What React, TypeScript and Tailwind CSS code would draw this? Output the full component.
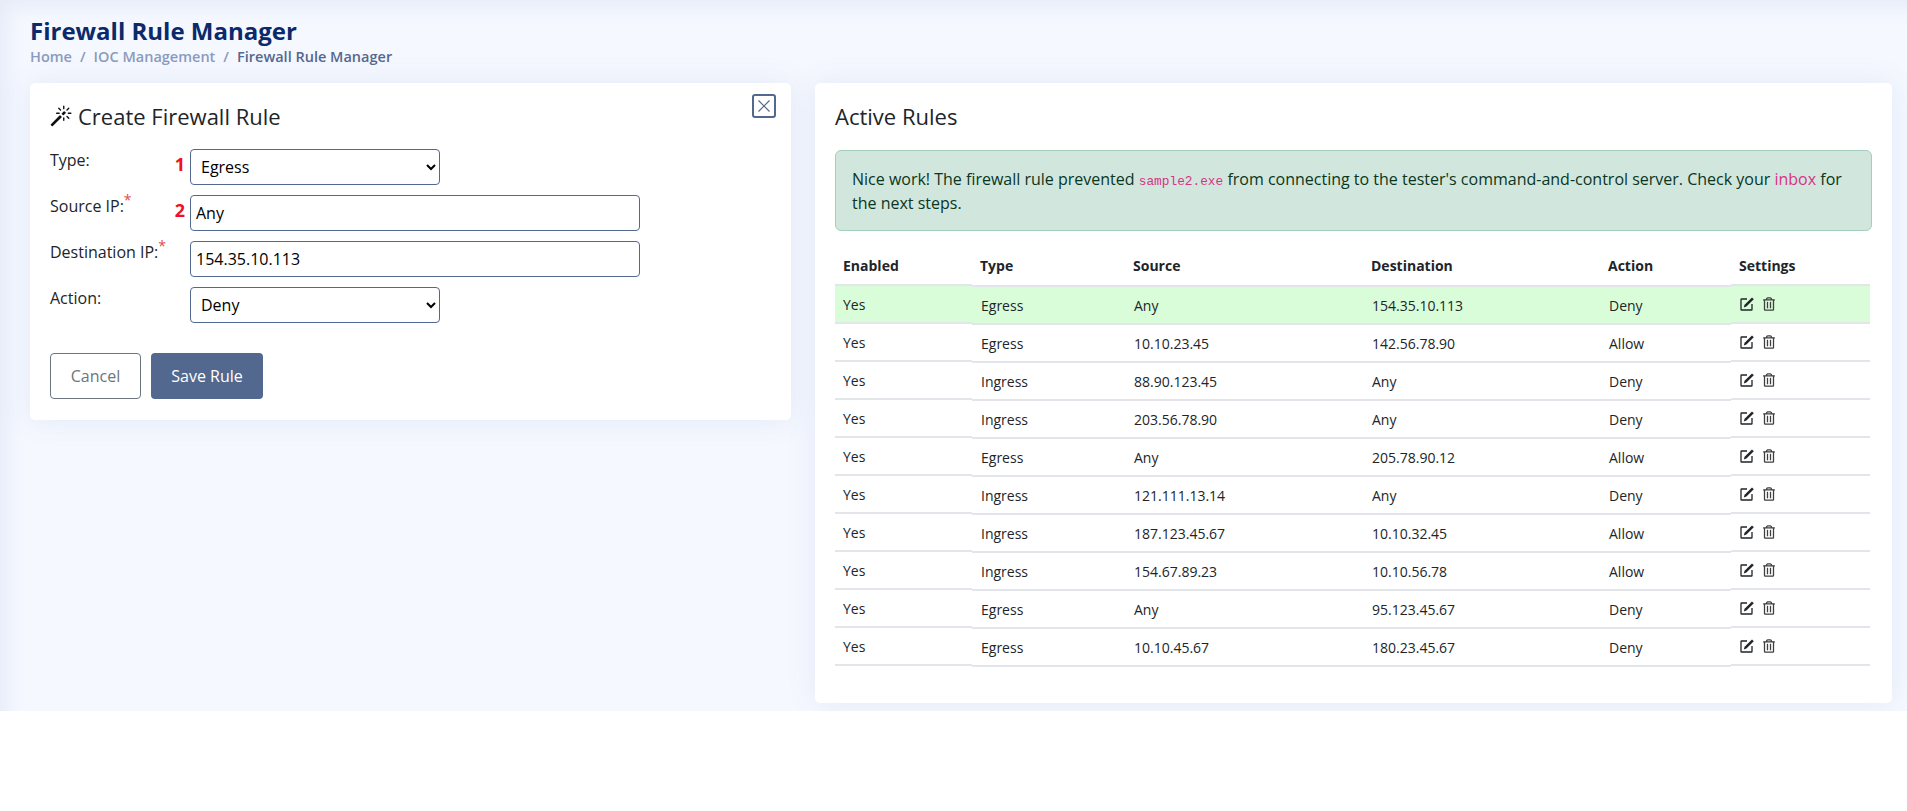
import React from 'react';
import { BsMagic } from 'react-icons/bs';
import { FaRegTrashAlt } from 'react-icons/fa';

const rules = [
    ['Yes', 'Egress', 'Any', '154.35.10.113', 'Deny'],
    ['Yes', 'Egress', '10.10.23.45', '142.56.78.90', 'Allow'],
    ['Yes', 'Ingress', '88.90.123.45', 'Any', 'Deny'],
    ['Yes', 'Ingress', '203.56.78.90', 'Any', 'Deny'],
    ['Yes', 'Egress', 'Any', '205.78.90.12', 'Allow'],
    ['Yes', 'Ingress', '121.111.13.14', 'Any', 'Deny'],
    ['Yes', 'Ingress', '187.123.45.67', '10.10.32.45', 'Allow'],
    ['Yes', 'Ingress', '154.67.89.23', '10.10.56.78', 'Allow'],
    ['Yes', 'Egress', 'Any', '95.123.45.67', 'Deny'],
    ['Yes', 'Egress', '10.10.45.67', '180.23.45.67', 'Deny'],
];

const columns = [
    { title: 'Enabled', width: 'w-[137px]', head: 'h-[55px] pb-[8px]', text: 'pl-2' },
    { title: 'Type', width: 'w-[153px]', head: 'h-[56px] pb-[9px]', text: 'pl-[9px]' },
    { title: 'Source', width: 'w-[238px]', head: 'h-[56px] pb-[9px]', text: 'pl-[9px]' },
    { title: 'Destination', width: 'w-[237px]', head: 'h-[56px] pb-[9px]', text: 'pl-[9px]' },
    { title: 'Action', width: 'w-[131px]', head: 'h-[56px] pb-[9px]', text: 'pl-[9px]' },
];

const EditIcon = () => (
    <svg width="14" height="14" viewBox="0 0 14 14" className="text-[#212529]">
        <path d="M7 2H1.6a.6.6 0 0 0-.6.6v9.8a.6.6 0 0 0 .6.6h9.8a.6.6 0 0 0 .6-.6V7" fill="none" stroke="currentColor" strokeWidth="1.3" />
        <path d="M12 .4L13.8 2.2 6.4 9.6 3.8 10.4 4.6 7.8Z" fill="currentColor" />
    </svg>
);

const Field: React.FC<{ label: string; required?: boolean; mark?: string; children: React.ReactNode }> = ({ label, required, mark, children }) => (
    <div className="flex items-start h-[36px] mb-[10px]">
        <label className="w-[120px] -mt-[1px] text-[16px] leading-[24px] text-[#212529]">
            {label}
            {required && <sup className="text-[#e5484d] text-[14px]">*</sup>}
        </label>
        <span className="w-[20px] pr-[5px] pt-[3px] text-right text-[18px] leading-[24px] font-bold text-[#f00f24]">{mark}</span>
        {children}
    </div>
);

const App: React.FC = () => {
    return (
        <div className="h-[711px] bg-[#f5f8ff] font-['Open_Sans',sans-serif] shadow-[inset_14px_14px_18px_-6px_rgba(70,100,170,0.08)]">
            <div className="px-[30px] pt-[15px] pb-[16px]">
                <h1 className="text-[24px] leading-[32px] font-bold text-[#0a2a6b]">Firewall Rule Manager</h1>
                <div className="flex gap-[8px] text-[14.5px] leading-[20px] font-semibold text-[#8b9bbd]">
                    <span>Home</span>
                    <span>/</span>
                    <span>IOC Management</span>
                    <span>/</span>
                    <span className="text-[#55688f]">Firewall Rule Manager</span>
                </div>
            </div>

            <div className="flex items-start gap-[24px] pl-[30px]">
                <div className="relative shrink-0 w-[761px] h-[337px] bg-white rounded-[5px] pl-[20px] pt-[19px] shadow-[0_0_30px_rgba(70,100,170,0.1)]">
                    <button className="absolute right-[15px] top-[11px] w-[24px] h-[24px] flex items-center justify-center border-2 border-[#53688f] rounded-[3px]">
                        <svg width="14" height="14" viewBox="0 0 14 14" fill="none" stroke="#53688f" strokeWidth="1.2">
                            <path d="M1.5 1.5L12.5 12.5M12.5 1.5L1.5 12.5" />
                        </svg>
                    </button>
                    <h2 className="flex items-center gap-[6px] text-[22px] leading-[28px] text-[#212529] mb-[19px]">
                        <BsMagic className="w-[22px] h-[22px] text-[#111]" />
                        Create Firewall Rule
                    </h2>
                    <div>
                        <Field label="Type:" mark="1">
                            <select className="w-[250px] h-[36px] pl-[6px] text-[16px] text-black bg-white border border-[#53688f] rounded-[4px]" defaultValue="Egress">
                                <option>Egress</option>
                                <option>Ingress</option>
                            </select>
                        </Field>
                        <Field label="Source IP:" required mark="2">
                            <input className="w-[450px] h-[36px] px-[5px] text-[16px] text-black border border-[#53688f] rounded-[4px]" defaultValue="Any" />
                        </Field>
                        <Field label="Destination IP:" required>
                            <input className="w-[450px] h-[36px] px-[5px] text-[16px] text-black border border-[#53688f] rounded-[4px]" defaultValue="154.35.10.113" />
                        </Field>
                        <Field label="Action:">
                            <select className="w-[250px] h-[36px] pl-[6px] text-[16px] text-black bg-white border border-[#53688f] rounded-[4px]" defaultValue="Deny">
                                <option>Deny</option>
                                <option>Allow</option>
                            </select>
                        </Field>
                    </div>
                    <div className="flex gap-[10px] mt-[30px]">
                        <button className="w-[91px] h-[46px] text-[16px] text-[#6c757d] border border-[#6c757d] rounded-[4px]">Cancel</button>
                        <button className="w-[112px] h-[46px] text-[16px] font-medium text-white bg-[#53688f] rounded-[4px]">Save Rule</button>
                    </div>
                </div>

                <div className="shrink-0 w-[1077px] h-[620px] bg-white rounded-[5px] px-[20px] pt-[19px] shadow-[0_0_30px_rgba(70,100,170,0.1)]">
                    <h2 className="text-[22px] leading-[28px] text-[#212529] mb-[20px]">Active Rules</h2>
                    <div className="h-[81px] px-[16px] pt-[16px] text-[16px] leading-[24px] text-[#0a3622] bg-[#d1e7dd] border border-[#a3cfbb] rounded-[6px]">
                        Nice work! The firewall rule prevented <code className="font-['Liberation_Mono',monospace] leading-none text-[12.8px] text-[#d63384]">sample2.exe</code> from connecting to the tester's command-and-control server. Check your <a className="text-[#d63384]">inbox</a> for the next steps.
                    </div>
                    <div className="flex text-[14px] text-[#212529]">
                        {columns.map((col, i) => (
                            <div key={col.title} className={col.width}>
                                <div className={`${col.head} flex items-end font-bold pl-[8px] border-b-2 border-[#e2e5ea]`}>{col.title}</div>
                                {rules.map((r, j) => (
                                    <div key={j} className={`h-[38px] flex items-center border-b-2 border-[#e2e5ea] ${col.text} ${j === 0 ? 'bg-[#d9fdd9]' : ''}`}>{r[i]}</div>
                                ))}
                            </div>
                        ))}
                        <div className="w-[139px]">
                            <div className="h-[55px] flex items-end pb-[8px] font-bold pl-[8px] border-b-2 border-[#e2e5ea]">Settings</div>
                            {rules.map((_, j) => (
                                <div key={j} className={`h-[38px] flex items-center gap-[9px] pl-[9px] pb-[1px] border-b-2 border-[#e2e5ea] ${j === 0 ? 'bg-[#d9fdd9]' : ''}`}>
                                    <EditIcon />
                                    <FaRegTrashAlt className="w-[12px] h-[14px] text-[#3f3f3f]" />
                                </div>
                            ))}
                        </div>
                    </div>
                </div>
            </div>
        </div>
    );
};

export default App;
